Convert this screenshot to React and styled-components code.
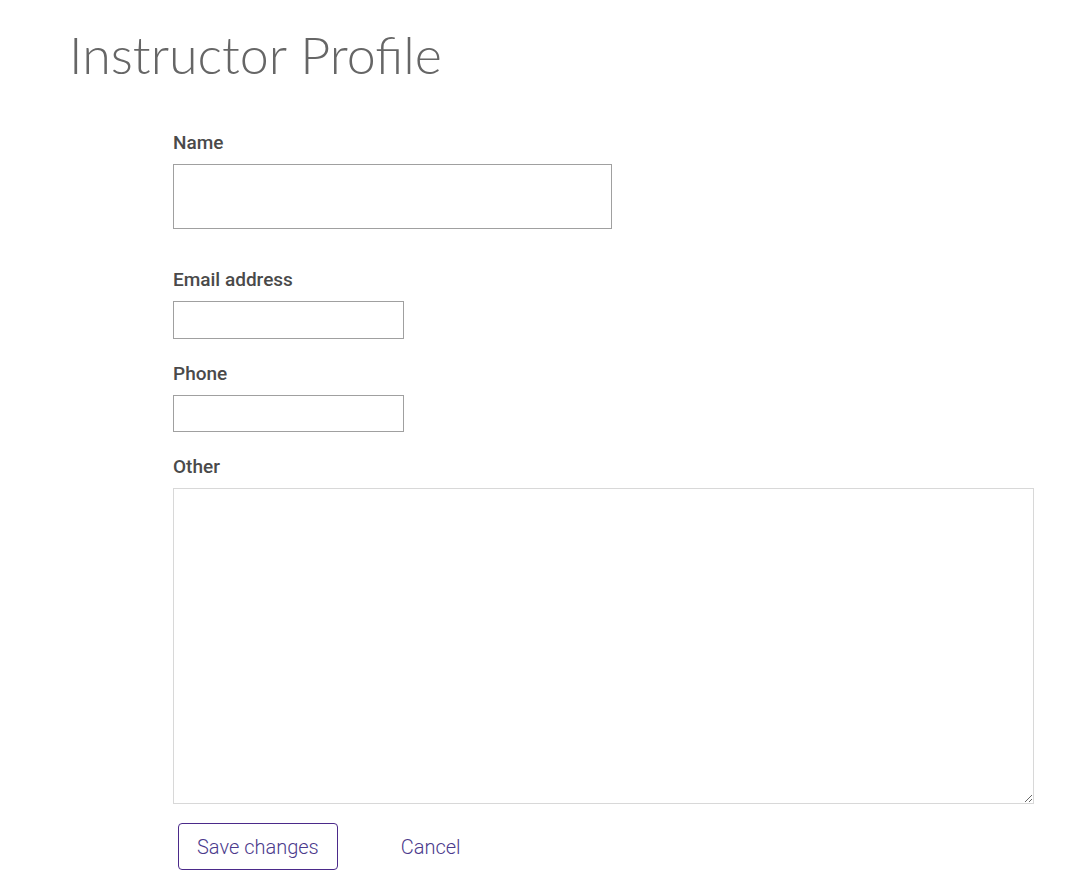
import React from 'react';
import styled, { createGlobalStyle } from 'styled-components';

const GlobalStyle = createGlobalStyle`
  body {
    margin: 0;
    background: #fff;
    font-family: Roboto, "Liberation Sans", sans-serif;
  }
`;

const Page = styled.div`
  padding: 22px 0 0 69px;
`;

const Title = styled.h1`
  margin: 0;
  font-family: Lato, Roboto, sans-serif;
  font-weight: 300;
  font-size: 52px;
  line-height: 64px;
  color: #666;
`;

const Form = styled.form`
  margin: 44px 0 0 104px;
  width: 861px;
  display: flex;
  flex-direction: column;
`;

const Field = styled.div`
  display: flex;
  flex-direction: column;
  margin-bottom: ${p => p.$gap || 22}px;
`;

const Label = styled.label`
  font-size: 19px;
  font-weight: 500;
  color: #4a4a4a;
  line-height: 26px;
  margin-bottom: 8px;
`;

const Input = styled.input`
  box-sizing: border-box;
  width: ${p => p.$w}px;
  height: ${p => p.$h}px;
  border: 1px solid #a0a0a0;
  padding: 0 8px;
  font: inherit;
`;

const TextArea = styled.textarea`
  box-sizing: border-box;
  width: 861px;
  height: 316px;
  border: 1px solid #d8d8d8;
  font: inherit;
`;

const Actions = styled.div`
  display: flex;
  align-items: center;
  gap: 45px;
  margin: -3px 0 0 5px;
`;

const Button = styled.button`
  box-sizing: border-box;
  height: 47px;
  padding: 0 18px;
  font-family: Roboto, sans-serif;
  font-weight: 300;
  font-size: 20px;
  color: #4b3a8c;
  background: #fff;
  border: ${p => (p.$outline ? '1px solid #4b2a8a' : 'none')};
  border-radius: 4px;
  cursor: pointer;
`;

export default function App() {
  return (
    <Page>
      <GlobalStyle />
      <Title>Instructor Profile</Title>
      <Form>
        <Field $gap={38}>
          <Label>Name</Label>
          <Input $w={439} $h={65} />
        </Field>
        <Field>
          <Label>Email address</Label>
          <Input $w={231} $h={38} />
        </Field>
        <Field>
          <Label>Phone</Label>
          <Input $w={231} $h={37} />
        </Field>
        <Field>
          <Label>Other</Label>
          <TextArea />
        </Field>
        <Actions>
          <Button type="button" $outline>Save changes</Button>
          <Button type="button">Cancel</Button>
        </Actions>
      </Form>
    </Page>
  );
}
